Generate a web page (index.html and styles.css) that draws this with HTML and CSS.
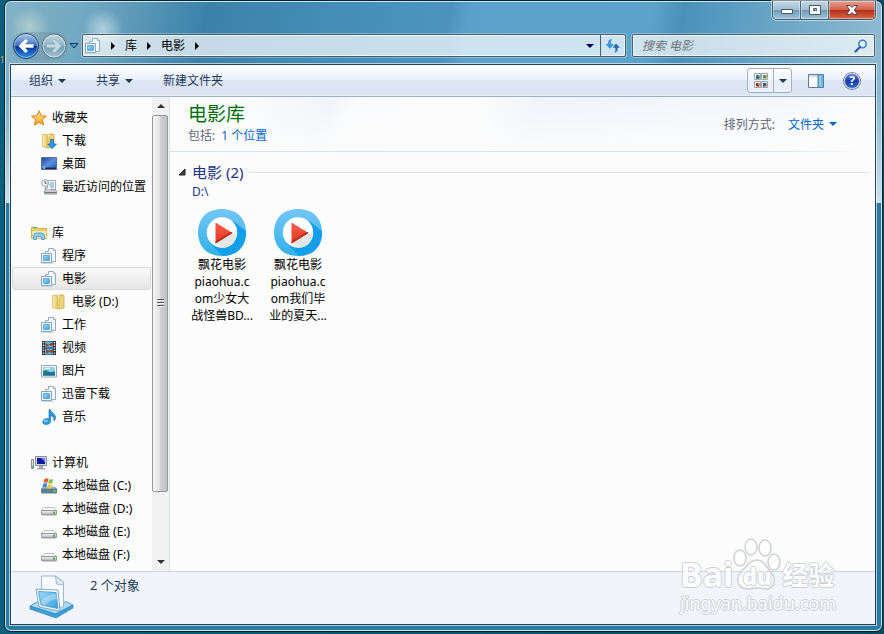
FILE: index.html
```html
<!DOCTYPE html>
<html lang="zh-CN">
<head>
    <meta charset="UTF-8">
    <meta name="viewport" content="width=device-width, initial-scale=1.0">
    <title>电影库</title>
    <link rel="stylesheet" href="styles.css">
</head>
<body>
    <!-- shared icons -->
    <svg class="defs" width="0" height="0" aria-hidden="true">
        <defs>
            <linearGradient id="gBlue" x1="0" y1="0" x2="1" y2="1">
                <stop offset="0" stop-color="#9fdcf8"/><stop offset="1" stop-color="#3a9fe0"/>
            </linearGradient>
            <linearGradient id="gScreen" x1="0" y1="0" x2="1" y2="1">
                <stop offset="0" stop-color="#1c3fa0"/><stop offset=".5" stop-color="#5a90e0"/><stop offset="1" stop-color="#1d57b4"/>
            </linearGradient>
            <linearGradient id="gFolder" x1="0" y1="0" x2="1" y2="0">
                <stop offset="0" stop-color="#fdf3b8"/><stop offset="1" stop-color="#e3c35c"/>
            </linearGradient>
            <linearGradient id="gStar" x1="0" y1="0" x2="0" y2="1">
                <stop offset="0" stop-color="#fff0a0"/><stop offset="1" stop-color="#f6a01c"/>
            </linearGradient>
            <linearGradient id="gDisk" x1="0" y1="0" x2="0" y2="1">
                <stop offset="0" stop-color="#f4f4f6"/><stop offset="1" stop-color="#a9acb4"/>
            </linearGradient>
            <linearGradient id="gRing" x1="0" y1="0" x2="0" y2="1">
                <stop offset="0" stop-color="#74c6f8"/><stop offset="1" stop-color="#30b0e8"/>
            </linearGradient>
            <linearGradient id="gPlay" x1="0" y1="0" x2="0" y2="1">
                <stop offset="0" stop-color="#fb5a48"/><stop offset="1" stop-color="#e03a28"/>
            </linearGradient>
            <linearGradient id="gBack" x1="0" y1="0" x2="0" y2="1">
                <stop offset="0" stop-color="#b4cdea"/><stop offset=".48" stop-color="#3a6fc4"/><stop offset=".52" stop-color="#0a2f92"/><stop offset="1" stop-color="#2a9cf0"/>
            </linearGradient>
            <linearGradient id="gForward" x1="0" y1="0" x2="0" y2="1">
                <stop offset="0" stop-color="#c3d7e0"/><stop offset=".5" stop-color="#8db2c2"/><stop offset=".52" stop-color="#6f9eb2"/><stop offset="1" stop-color="#a6c8d4"/>
            </linearGradient>
            <clipPath id="ring"><path d="M24 0C38.500 0 48 9 48 23.500S38.500 47 24 47 0 38 0 23.500 9.500 0 24 0z"/></clipPath>
        </defs>
        <symbol id="icon-library" viewBox="0 0 16 16">
            <path d="M4.500 3.500h3v-3h5l2 2v11h-10z" fill="#f4f9fd" stroke="#93abc2"/>
            <path d="M12.500.5v2h2" fill="#fff" stroke="#93abc2"/>
            <path d="M.5 5.500h10v9H.5z" fill="#fff" stroke="#8ba3ba"/>
            <path d="M2.500 7.500h6v5h-6z" fill="url(#gBlue)" stroke="#5aa8e0"/>
            <path d="M1 15.500h12" stroke="#c8dae8"/>
        </symbol>
        <symbol id="icon-star" viewBox="0 0 16 16">
            <path d="M8 .8l2.100 4.900 5.300.5-4 3.500 1.200 5.300L8 12.200 3.400 15l1.200-5.300-4-3.500 5.300-.5z" fill="url(#gStar)" stroke="#e2791a"/>
        </symbol>
        <symbol id="icon-folder" viewBox="0 0 16 16">
            <path d="M1.500 1.500h4l1 1v12l-5-.8z" fill="url(#gFolder)" stroke="#d9b654" stroke-width=".8"/>
            <path d="M6.500 1.500l4-1v12l-4 3z" fill="#fbeeb0" stroke="#d9b654" stroke-width=".8"/>
            <path d="M10 1.500h3v12.500l-5 1V4.500z" fill="#ecd47e" stroke="#cda83e" stroke-width=".8"/>
        </symbol>
        <symbol id="icon-download" viewBox="0 0 16 16">
            <use href="#icon-folder"/>
            <path d="M9.500 6.500h3v4.500h3L11 15.700 6.800 11h2.700z" fill="#2f9ae8" stroke="#1469b8" stroke-width=".7"/>
        </symbol>
        <symbol id="icon-desktop" viewBox="0 0 16 16">
            <path d="M.5 1.500h15v12H.5z" fill="url(#gScreen)" stroke="#5a7090"/>
            <path d="M1 11.500h14V13H1z" fill="#1c2c48"/>
            <circle cx="3" cy="11.500" r="1.700" fill="#46b0e8"/>
            <path d="M2.500 10.500h1v1h-1z" fill="#f0b23c"/>
        </symbol>
        <symbol id="icon-recent" viewBox="0 0 16 16">
            <path d="M6.500 1.500h8v9h-8z" fill="#f6f8fa" stroke="#a0a8b2"/>
            <path d="M9 4h4M8 6h5M9 8h4" stroke="#5fa6c8"/>
            <path d="M4.500 8v3l-1 1v3h12v-3l-2-1.500h-4" fill="#c8ccd2" stroke="#8d949d"/>
            <path d="M4 13.500h11" stroke="#6f767f"/>
            <circle cx="4" cy="4" r="3.400" fill="#f2f5f7" stroke="#98a0a8"/>
            <path d="M4 2v2.200h1.700" fill="none" stroke="#4a5560"/>
        </symbol>
        <symbol id="icon-libraries" viewBox="0 0 16 16">
            <path d="M.5 2.500h6l1 1h8v10H.5z" fill="#f2d774" stroke="#d0a840"/>
            <path d="M2 2h4v1.500H2z" fill="#5cb85c"/>
            <path d="M1 5.500h14.500v8H1z" fill="#fbeeb0" stroke="#d9b958" stroke-width=".7"/>
            <path d="M2.500 14.500V11q0-3 3-3h5q3 0 3 3v3.500h-3v-3h-5v3z" fill="#8fd0f2" stroke="#3f92cc" stroke-width=".8"/>
        </symbol>
        <symbol id="icon-video" viewBox="0 0 16 16">
            <path d="M1 1h14v14H1z" fill="#2c3036"/>
            <path d="M4 1.500h8v6H4zM4 8.500h8v6H4z" fill="#5fb4ea"/>
            <path d="M4 3l3.500 1.500L12 2v4L8 5 5 7zM5 9l3 1.500 4-1v3.500L8 12l-3 2z" fill="#93482e"/>
            <path d="M2.500 2v12M13.500 2v12" stroke="#e8eef2" stroke-width="1.400" stroke-dasharray="1.300 1.300"/>
        </symbol>
        <symbol id="icon-picture" viewBox="0 0 16 16">
            <path d="M.5 2.500h15v11.500H.5z" fill="#fff" stroke="#98a3ad"/>
            <path d="M2 4h12v8.500H2z" fill="#8fd4f4"/>
            <path d="M2 8q3-2 5 0t7 0v4.500H2z" fill="#2e8a6c"/>
            <path d="M2 10.500q6-2 12 0v2H2z" fill="#1d6ba4"/>
            <path d="M3 6.500q3-2 6-1" stroke="#fff" fill="none"/>
        </symbol>
        <symbol id="icon-music" viewBox="0 0 16 16">
            <path d="M8 .5h1.200c.8 3 5 4 5.300 7.500.2 2-.8 3.500-1.500 4 .5-3-1.500-5-3.500-5.500v6c0 2-2 3-4.500 3s-3.500-1.300-3.300-2.700c.2-2 2.300-3.300 4.300-3.300 1 0 1.500.2 2 .5z" fill="#2c96e0" stroke="#1a6cb4" stroke-width=".6"/>
            <ellipse cx="4.800" cy="12" rx="2" ry="1.200" fill="#7cc8f6"/>
        </symbol>
        <symbol id="icon-computer" viewBox="0 0 16 16">
            <path d="M.5 4.500h2v9h-2z" fill="#d4d7dc" stroke="#8a9098"/>
            <path d="M1 11h1v2H1z" fill="#52b848"/>
            <path d="M4.500 1.500h11v9h-11z" fill="#d4d8de" stroke="#868d98"/>
            <path d="M6 3h8v6H6z" fill="#1018a8"/>
            <path d="M10 3h4v4z" fill="#6a8cf0"/>
            <path d="M8 11h4v2h2v1.500H6V13h2z" fill="#a4aab4"/>
        </symbol>
        <symbol id="icon-disk" viewBox="0 0 16 16">
            <path d="M3 6.500h10l2.500 3H.5z" fill="#f5f6f7" stroke="#b2b5ba" stroke-width=".8"/>
            <path d="M.5 9.500h15v3.500q0 1-1 1h-13q-1 0-1-1z" fill="url(#gDisk)" stroke="#84878f" stroke-width=".8"/>
            <path d="M12 10.500h2v2.500h-2z" fill="#4cb83c"/>
        </symbol>
        <symbol id="icon-system" viewBox="0 0 16 16">
            <path d="M2 9h12l1.500 2H.5z" fill="#c8dce4" stroke="#8a9aa4" stroke-width=".8"/>
            <path d="M.5 11h15v4H.5z" fill="#55869c" stroke="#5a6c78" stroke-width=".8"/>
            <path d="M12.500 12h2v2h-2z" fill="#6ad84c"/>
            <path d="M3.500 1q2-1.300 4-.3l-1 4q-2-1-4 .3z" fill="#e8562c"/>
            <path d="M8.200 1.300q2 .8 4-.3l-1 4q-2 1-4 .3z" fill="#7cc242"/>
            <path d="M2.300 5.700q2-1.300 4-.3l-1 4q-2-1-4 .3z" fill="#3c8ae0"/>
            <path d="M7 6.200q2 .8 4-.3l-1 4q-2 1-4 .3z" fill="#f8c42c"/>
        </symbol>
        <symbol id="icon-player" viewBox="0 0 48 47">
            <g clip-path="url(#ring)">
                <path d="M0 0h48v48H0z" fill="url(#gRing)"/>
                <path d="M35 12l13 10v26H26L12 34z" fill="#109fe8"/>
            </g>
            <circle cx="24" cy="23.500" r="15.200" fill="#fff"/>
            <path d="M18 34l17-10 4 2Q36 38.500 25 38.700z" fill="#e4e6e8"/>
            <path d="M17.500 13.500l17 10.500-17 10.500z" fill="url(#gPlay)"/>
            <path d="M17.500 34.500l17-10.500-1.500-1-15.500 9.500z" fill="#b82a1c"/>
        </symbol>
    </svg>

    <span class="desktop-label">1</span>

    <div class="window">
        <header class="titlebar">
            <div class="caption">
                <button type="button" class="minimize" aria-label="最小化"><svg width="14" height="12"><path d="M1.500 5.500h11v4h-11z" fill="#fff" stroke="#4a5568"/></svg></button>
                <button type="button" class="maximize" aria-label="最大化"><svg width="14" height="12"><path d="M1.500 1.500h11v9h-11zM5.500 4.500h3v2h-3z" fill="#fff" fill-rule="evenodd" stroke="#4a5568"/></svg></button>
                <button type="button" class="close" aria-label="关闭"><svg width="14" height="12"><path d="M1.500 1.500h3.500l2 2 2-2h3.500L9.300 6l3.200 4.500H9l-2-2-2 2H1.500L4.700 6z" fill="#fff" stroke="#5a4048"/></svg></button>
            </div>
        </header>

        <nav class="navbar">
            <div class="travel">
                <div class="orbs">
                    <button type="button" aria-label="后退"><svg width="28" height="28" viewBox="0 0 28 28"><circle cx="14" cy="14" r="12.500" fill="url(#gBack)" stroke="#23426e"/><circle cx="14" cy="14" r="11.500" fill="none" stroke="#bcd6f0" stroke-opacity=".6"/><path d="M6.500 14L13.500 7l2.500 2-3 3.200h8.500v3.600H13l3 3.200-2.500 2z" fill="#fff"/></svg></button>
                    <button type="button" aria-label="前进"><svg width="28" height="28" viewBox="0 0 28 28"><circle cx="14" cy="14" r="12" fill="url(#gForward)" stroke="#56727f"/><circle cx="14" cy="14" r="11" fill="none" stroke="#e0eef4" stroke-opacity=".7"/><path d="M21.500 14l-7-7-2.500 2 3 3.200H6.500v3.600H15l-3 3.200 2.500 2z" fill="#c3d8e0" stroke="#8aabb8" stroke-width=".6"/></svg></button>
                </div>
                <button type="button" aria-label="最近页面"><svg width="10" height="8"><path d="M1 1.500h8L5 6z" fill="#4f9cd0" stroke="#12386a"/></svg></button>
            </div>
            <div class="address">
                <svg class="icon" width="16" height="16"><use href="#icon-library"/></svg>
                <span class="chevron"></span>
                <a href="#">库</a>
                <span class="chevron"></span>
                <a href="#">电影</a>
                <span class="chevron"></span>
                <button type="button" class="address-drop" aria-label="以前的位置"><span class="arrow"></span></button>
                <button type="button" class="refresh" aria-label="刷新"><svg width="16" height="16" viewBox="0 0 16 16"><path d="M7 1Q2.500 1.500 3 6H.5L5 11l4-5H6Q5.500 3 7 1z" fill="#3f97dc"/><path d="M9 15q4.500-.5 4-5h2.500L11 5l-4 5h3q.5 3-1 5z" fill="#2a68b8" stroke="#e4f0f6" stroke-width=".6"/></svg></button>
            </div>
            <div class="search">
                <input type="text" placeholder="搜索 电影" aria-label="搜索 电影">
                <svg width="14" height="14" viewBox="0 0 14 14"><circle cx="8.500" cy="5" r="3.700" fill="#e8f4fb" stroke="#3f7fc4" stroke-width="1.600"/><path d="M6 8L1.500 12.500" stroke="#2a5ca8" stroke-width="2.200" stroke-linecap="round"/></svg>
            </div>
        </nav>

        <div class="client">
            <div class="toolbar">
                <button type="button">组织<span class="arrow"></span></button>
                <button type="button">共享<span class="arrow"></span></button>
                <button type="button">新建文件夹</button>
                <div class="tools">
                    <div class="view-switch">
                        <button type="button" aria-label="更改视图"><svg width="16" height="16" viewBox="0 0 16 16"><path d="M1.500.5h6v6h-6zM8.500.5h6v6h-6zM1.500 8.500h6v6h-6zM8.500 8.500h6v6h-6z" fill="#fff" stroke="#98a4b4"/><path d="M3 2h3.500v3.500H3z" fill="#2f86a4"/><path d="M3 4h3.500v1.500H3z" fill="#1c5a34"/><path d="M10 2h3.500v3.500H10z" fill="#4c9a30"/><path d="M12 2h1.500v2H12z" fill="#e8722c"/><path d="M3 10h3.500v3.500H3z" fill="#a02c10"/><path d="M5 10h1.500v1.500H5z" fill="#e8922c"/><path d="M10 10h3.500v3.500H10z" fill="#2c5c9c"/><path d="M10 12h2v1.500h-2z" fill="#b03c1c"/></svg></button>
                        <button type="button" class="view-drop" aria-label="更多选项"><span class="arrow"></span></button>
                    </div>
                    <button type="button" aria-label="预览窗格"><svg width="16" height="14" viewBox="0 0 16 14"><path d="M.5.5h15v13H.5z" fill="#fff" stroke="#5f7a9c"/><path d="M1 1h9v2H1z" fill="#cfdcea"/><path d="M10 1h5v12h-5z" fill="#66bfd8"/><path d="M10 1v12" stroke="#4a7494"/><path d="M12 2v10" stroke="#b4e6f2"/></svg></button>
                    <button type="button" class="help" aria-label="获取帮助"><span>?</span></button>
                </div>
            </div>

            <div class="explorer">
                <aside class="sidebar">
                    <ul class="tree">
                        <li><a href="#"><svg class="icon"><use href="#icon-star"/></svg>收藏夹</a>
                            <ul>
                                <li><a href="#"><svg class="icon"><use href="#icon-download"/></svg>下载</a></li>
                                <li><a href="#"><svg class="icon"><use href="#icon-desktop"/></svg>桌面</a></li>
                                <li><a href="#"><svg class="icon"><use href="#icon-recent"/></svg>最近访问的位置</a></li>
                            </ul>
                        </li>
                        <li><a href="#"><svg class="icon"><use href="#icon-libraries"/></svg>库</a>
                            <ul>
                                <li><a href="#"><svg class="icon"><use href="#icon-library"/></svg>程序</a></li>
                                <li><a href="#" class="selected"><svg class="icon"><use href="#icon-library"/></svg>电影</a>
                                    <ul>
                                        <li><a href="#"><svg class="icon"><use href="#icon-folder"/></svg>电影 (D:)</a></li>
                                    </ul>
                                </li>
                                <li><a href="#"><svg class="icon"><use href="#icon-library"/></svg>工作</a></li>
                                <li><a href="#"><svg class="icon"><use href="#icon-video"/></svg>视频</a></li>
                                <li><a href="#"><svg class="icon"><use href="#icon-picture"/></svg>图片</a></li>
                                <li><a href="#"><svg class="icon"><use href="#icon-library"/></svg>迅雷下载</a></li>
                                <li><a href="#"><svg class="icon"><use href="#icon-music"/></svg>音乐</a></li>
                            </ul>
                        </li>
                        <li><a href="#"><svg class="icon"><use href="#icon-computer"/></svg>计算机</a>
                            <ul>
                                <li><a href="#"><svg class="icon"><use href="#icon-system"/></svg>本地磁盘 (C:)</a></li>
                                <li><a href="#"><svg class="icon"><use href="#icon-disk"/></svg>本地磁盘 (D:)</a></li>
                                <li><a href="#"><svg class="icon"><use href="#icon-disk"/></svg>本地磁盘 (E:)</a></li>
                                <li><a href="#"><svg class="icon"><use href="#icon-disk"/></svg>本地磁盘 (F:)</a></li>
                            </ul>
                        </li>
                    </ul>
                    <div class="scrollbar">
                        <button type="button" aria-label="向上滚动"><span class="arrow up"></span></button>
                        <div class="track"><div class="thumb"><span class="grip"></span></div></div>
                        <button type="button" aria-label="向下滚动"><span class="arrow"></span></button>
                    </div>
                </aside>

                <main class="content">
                    <div class="library-header">
                        <div>
                            <h1>电影库</h1>
                            <p>包括: <a href="#">1 个位置</a></p>
                        </div>
                        <div class="arrange">
                            <span>排列方式:</span>
                            <button type="button">文件夹<span class="arrow"></span></button>
                        </div>
                    </div>
                    <section class="group">
                        <h2><svg width="8" height="8"><path d="M7 1v6H1z" fill="#444" stroke="#222"/></svg>电影 (2)</h2>
                        <p>D:\</p>
                        <ul class="files">
                            <li><svg width="48" height="47"><use href="#icon-player"/></svg>飘花电影<br>piaohua.c<br>om少女大<br>战怪兽BD...</li>
                            <li><svg width="48" height="47"><use href="#icon-player"/></svg>飘花电影<br>piaohua.c<br>om我们毕<br>业的夏天...</li>
                        </ul>
                    </section>
                </main>
            </div>

            <footer class="details">
                <svg width="46" height="44" viewBox="0 0 46 44">
                    <path d="M1 31l7-4h30l6 3-18 9z" fill="#a6dbf4" stroke="#5ba6cf"/>
                    <path d="M1 31l26 8 17-9v3l-17 10L1 34z" fill="#3f9fd4" stroke="#2d86bc" stroke-width=".7"/>
                    <path d="M12.500 1h14l8 6v25h-22z" fill="#f5fafd" stroke="#9fb8c8"/>
                    <path d="M26.500 1l1 8 7 1V7z" fill="#dce8f0" stroke="#9fb8c8"/>
                    <path d="M7 14l22 1 2 21-21-4z" fill="#fff" stroke="#7da8c4"/>
                    <path d="M9.500 16.500l17.500 1 2 16-17-3.500z" fill="url(#gBlue)" stroke="#4f9fd4"/>
                    <path d="M11 28q4-8 16-9l1 5q-8 1-13 7z" fill="#fff" fill-opacity=".3"/>
                </svg>
                <span>2 个对象</span>
            </footer>
        </div>
    </div>

    <div class="watermark">
        <div class="brand">
            <span>Bai</span>
            <span class="paw">
                <svg width="48" height="52" viewBox="0 0 48 52">
                    <g fill="#fff" stroke="#c6c9d0" stroke-width="1.500">
                        <ellipse cx="7" cy="20" rx="6" ry="8"/>
                        <ellipse cx="18" cy="9" rx="6" ry="8"/>
                        <ellipse cx="32" cy="10" rx="6" ry="8"/>
                        <ellipse cx="41" cy="24" rx="6" ry="8"/>
                        <path d="M24 22c6 0 9 6 13 11 6 6 6 17-3 18-4 0-6-1-10-1s-6 1-10 1C4 50 2 40 9 33c5-5 8-11 15-11z"/>
                    </g>
                </svg>
                <b>du</b>
            </span>
            <span class="cn">经验</span>
        </div>
        <div class="site">jingyan.baidu.com</div>
    </div>
</body>
</html>
```
FILE: styles.css
```css
* {
    box-sizing: border-box;
}
html, body {
    height: 100%;
}
body {
    margin: 0;
    padding: 0 1px 2px 4px;
    background: linear-gradient(90deg, #0a5f7c, #0b4a5e);
    font: 12px/17px "Noto Sans", "Noto Sans CJK SC", sans-serif;
    color: #000;
    overflow: hidden;
}
h1, h2, p, ul {
    margin: 0;
    padding: 0;
    font-weight: normal;
}
ul {
    list-style: none;
}
a {
    color: inherit;
    text-decoration: none;
}
button {
    border: 0;
    padding: 0;
    background: none;
    font: inherit;
    color: inherit;
    display: flex;
    align-items: center;
    justify-content: center;
}
svg {
    display: block;
    flex: none;
}
.defs {
    position: absolute;
}
.icon {
    width: 16px;
    height: 16px;
}
.arrow {
    border: 4px solid transparent;
    border-top-color: currentColor;
    border-bottom: 0;
}
.arrow.up {
    border-top: 0;
    border-bottom: 4px solid currentColor;
}
.desktop-label {
    position: absolute;
    left: 0;
    top: 51px;
    font-size: 8px;
    color: #d8a878;
}

/* window frame */
.window {
    height: 100%;
    display: flex;
    flex-direction: column;
    padding: 0 6px 6px 5px;
    border: 1px solid #0c2430;
    border-radius: 7px;
    box-shadow: inset 0 0 0 1px #c8e4f0;
    background:
        radial-gradient(circle at 25px 26px, rgba(225, 235, 215, .5), transparent 20px),
        radial-gradient(circle at 98px 28px, rgba(225, 240, 245, .6), transparent 20px),
        linear-gradient(180deg, transparent 202px, #2d7ba2 202px),
        linear-gradient(180deg, transparent 100px, rgba(255, 255, 255, .6) 202px, transparent 202px),
        linear-gradient(100deg, #82b2c6 0, #6fa6c0 90px, #3b82aa 200px, #4894be 400px, #4b93bd 440px, #5aa1cb 460px, #5ca3cc 640px, #4a91ba 670px, #5b9dc2 720px, #8ab8ce 860px);
}
.titlebar {
    display: flex;
    justify-content: flex-end;
    height: 33px;
}
.caption {
    display: flex;
    height: 19px;
    border: 1px solid #40596a;
    border-top: 0;
    border-radius: 0 0 5px 5px;
    overflow: hidden;
    box-shadow: 0 0 0 1px rgba(255, 255, 255, .5);
}
.caption button {
    width: 28px;
    border-right: 1px solid #4a687c;
    background: linear-gradient(#c5d8e4, #9dbccf 50%, #6e9ab6 50%, #9cc4da);
    box-shadow: inset 0 0 0 1px rgba(255, 255, 255, .4);
}
.caption .close {
    width: 46px;
    border-right: 0;
    background: linear-gradient(#e8a08c, #d0604a 50%, #b02c14 50%, #d86a48);
}

/* address row */
.navbar {
    display: flex;
    align-items: center;
    height: 23px;
    padding: 0 1px 0 2px;
    margin-bottom: 7px;
}
.travel {
    display: flex;
    align-items: center;
    gap: 1px;
    width: 70px;
}
.orbs {
    display: flex;
    border-radius: 14px;
    background: rgba(120, 150, 165, .5);
}
.address, .search {
    display: flex;
    align-items: center;
    height: 23px;
    border: 1px solid #45616f;
    border-radius: 2px;
    background: rgba(255, 255, 255, .7);
    box-shadow: inset 0 0 0 1px rgba(255, 255, 255, .7), 0 0 0 1px rgba(255, 255, 255, .3);
}
.address {
    flex: 1;
    padding-left: 2px;
}
.chevron {
    margin: 0 10px;
    border: 4px solid transparent;
    border-left-color: #000;
    border-right: 0;
}
.address-drop {
    margin-left: auto;
    width: 20px;
    color: #000050;
}
.refresh {
    width: 25px;
    height: 21px;
    border-left: 1px solid #45616f;
}
.search {
    width: 243px;
    margin-left: 6px;
    padding: 0 6px 0 9px;
}
.search input {
    flex: 1;
    min-width: 0;
    padding: 0;
    border: 0;
    outline: 0;
    background: none;
    font: inherit;
    font-style: italic;
}
.search input::placeholder {
    color: #6c7478;
    opacity: 1;
}

/* client area */
.client {
    flex: 1;
    min-height: 0;
    display: flex;
    flex-direction: column;
    border: 1px solid #23455a;
    box-shadow: 0 0 0 1px rgba(255, 255, 255, .6);
    background: #fcfcfc;
}
.toolbar {
    display: flex;
    align-items: center;
    height: 32px;
    padding-left: 18px;
    border-bottom: 1px solid #a0afc8;
    background: linear-gradient(#fff, #e8f1fb 15px, #dbe5f4 15px, #dce7f5 30px, #f0f5fb 31px);
    color: #1e395b;
    gap: 30px;
}
.toolbar button {
    gap: 5px;
}
.tools {
    display: flex;
    align-items: center;
    margin-left: auto;
    padding-right: 15px;
    gap: 16px;
}
.tools .help {
    width: 16px;
    height: 16px;
    margin-left: 4px;
    border-radius: 50%;
    background: linear-gradient(#5a7fe0, #1c3aa8 50%, #2f6ad8);
    box-shadow: 0 0 0 1px #7c8087;
    border: 1px solid #c8ccd4;
    color: #fff;
    font-size: 12px;
    font-weight: bold;
}
.view-switch {
    display: flex;
    height: 25px;
    border: 1px solid #a8b0bc;
    border-radius: 3px;
    background: rgba(255, 255, 255, .4);
}
.view-switch button {
    width: 25px;
}
.view-switch .view-drop {
    width: 18px;
    border-left: 1px solid #a8b0bc;
}
.explorer {
    flex: 1;
    min-height: 0;
    display: flex;
}

/* navigation pane */
.sidebar {
    display: flex;
    width: 159px;
    border-right: 1px solid #dbe5f2;
}
.tree {
    flex: 1;
    padding: 9px 1px 0;
    overflow: hidden;
    white-space: nowrap;
}
.tree > li {
    margin-bottom: 23px;
}
.tree a {
    display: flex;
    align-items: center;
    gap: 5px;
    height: 23px;
    padding-left: 19px;
    border: 1px solid transparent;
    border-left: 0;
    border-radius: 3px;
}
.tree ul a {
    padding-left: 29px;
}
.tree ul ul a {
    padding-left: 39px;
}
.tree .selected {
    border: 1px solid #d9d9d9;
    padding-left: 28px;
    background: linear-gradient(#fafafa, #e6e6e6);
}
.scrollbar {
    display: flex;
    flex-direction: column;
    width: 17px;
    background: #f1f1f1;
    color: #333;
}
.scrollbar button {
    height: 18px;
}
.track {
    flex: 1;
}
.thumb {
    display: flex;
    align-items: center;
    justify-content: center;
    width: 16px;
    height: 86%;
    border: 1px solid #979797;
    border-radius: 2px;
    background: linear-gradient(90deg, #f5f5f5, #e6e6e8 45%, #cfcfd3 55%, #bfc0c4);
}
.grip {
    width: 7px;
    height: 9px;
    background: repeating-linear-gradient(#555 0 1px, #f4f4f4 1px 2px, transparent 2px 3px);
}

/* library */
.content {
    flex: 1;
    min-width: 0;
}
.library-header {
    display: flex;
    justify-content: space-between;
    height: 55px;
    padding: 5px 38px 0 18px;
    background:
        linear-gradient(90deg, #d5e4f4 85%, transparent 99%) bottom / 100% 1px no-repeat,
        linear-gradient(rgba(252, 252, 252, 0), #fcfcfc),
        linear-gradient(115deg, #fcfcfc 60px, #f0f3f9 150px, #fafbfd 170px, #fcfcfc 280px, #eff3fa 340px, #f4f7fb 560px, #fcfcfc 640px);
    color: #5a6478;
}
h1 {
    font-size: 19px;
    line-height: 25px;
    color: #00700a;
}
.library-header a, .arrange button {
    color: #0066cc;
}
.library-header a {
    margin-left: 3px;
}
.arrange {
    display: flex;
    align-items: center;
    gap: 13px;
    padding-bottom: 6px;
}
.arrange button {
    gap: 5px;
}
.group {
    padding: 9px 7px 0 8px;
    color: #1e3287;
}
h2 {
    display: flex;
    align-items: center;
    gap: 6px;
    font-size: 15px;
    line-height: 22px;
}
h2::after {
    content: "";
    flex: 1;
    height: 1px;
    background: #e0e0e2;
}
.group p {
    padding-left: 14px;
}
.files {
    display: flex;
    gap: 2px;
    padding: 9px 0 0 7px;
    color: #000;
}
.files li {
    width: 74px;
    text-align: center;
}
.files svg {
    margin: 0 auto;
}

/* details pane */
.details {
    display: flex;
    height: 53px;
    padding: 3px 18px 0;
    gap: 15px;
    border-top: 1px solid #c9d6e8;
    background: #f1f4fb;
    color: #1e395b;
    font-size: 13px;
    line-height: 20px;
}

.watermark {
    position: absolute;
    right: 48px;
    bottom: 18px;
    font-family: "Noto Sans", sans-serif;
    color: #fff;
    opacity: .85;
    text-shadow: 1px 0 #c6c9d0, -1px 0 #c6c9d0, 0 1px #c6c9d0, 0 -1px #c6c9d0;
}
.brand {
    display: flex;
    align-items: flex-end;
    font-size: 34px;
    font-weight: bold;
    line-height: 32px;
}
.paw {
    position: relative;
}
.paw b {
    position: absolute;
    left: 0;
    right: 0;
    bottom: 2px;
    text-align: center;
    font-size: 22px;
    line-height: 24px;
}
.brand .cn {
    margin-left: 1px;
    font-family: "Noto Sans CJK SC", sans-serif;
    font-size: 26px;
}
.site {
    font-size: 18px;
    line-height: 26px;
}
```
